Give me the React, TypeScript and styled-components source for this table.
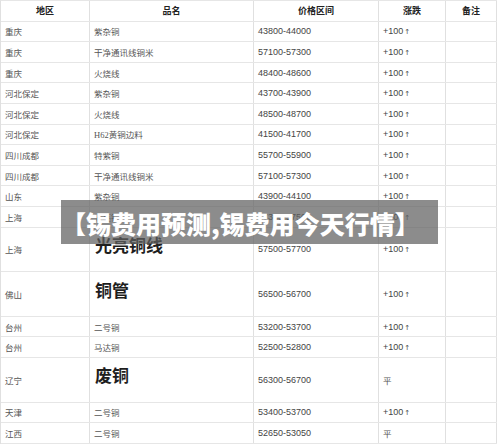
import React from "react";
import styled, { createGlobalStyle } from "styled-components";

const Global = createGlobalStyle`
  html, body { margin: 0; padding: 0; background: #fff; }
  body { font-family: "Liberation Sans", "Noto Sans CJK SC", sans-serif; }
`;

type Row = {
  region: string;
  name: string;
  price: string;
  change: string;
  big?: boolean;
};

const rows: Row[] = [
  { region: "重庆", name: "紫杂铜", price: "43800-44000", change: "+100" },
  { region: "重庆", name: "干净通讯线铜米", price: "57100-57300", change: "+100" },
  { region: "重庆", name: "火烧线", price: "48400-48600", change: "+100" },
  { region: "河北保定", name: "紫杂铜", price: "43700-43900", change: "+100" },
  { region: "河北保定", name: "火烧线", price: "48500-48700", change: "+100" },
  { region: "河北保定", name: "H62黄铜边料", price: "41500-41700", change: "+100" },
  { region: "四川成都", name: "特紫铜", price: "55700-55900", change: "+100" },
  { region: "四川成都", name: "干净通讯线铜米", price: "57100-57300", change: "+100" },
  { region: "山东", name: "紫杂铜", price: "43900-44100", change: "+100" },
  { region: "上海", name: "光亮铜线", price: "57300-57500", change: "+100" },
  { region: "上海", name: "光亮铜线", price: "57500-57700", change: "+100", big: true },
  { region: "佛山", name: "铜管", price: "56500-56700", change: "+100", big: true },
  { region: "台州", name: "二号铜", price: "53200-53700", change: "+100" },
  { region: "台州", name: "马达铜", price: "52500-52800", change: "+100" },
  { region: "辽宁", name: "废铜", price: "56300-56700", change: "平", big: true },
  { region: "天津", name: "二号铜", price: "53400-53700", change: "+100" },
  { region: "江西", name: "二号铜", price: "52650-53050", change: "平" },
];

const Page = styled.div`
  position: relative;
  width: 500px;
  height: 444px;
  overflow: hidden;
`;

const Table = styled.div`
  width: 497px;
  border-top: 1px solid #e6e6e6;
  border-left: 1px solid #e0e0e0;
  box-sizing: border-box;
`;

const GridRow = styled.div<{ $h: number }>`
  display: grid;
  grid-template-columns: 89px 164px 125px 67px 51px;
  height: ${(p) => p.$h}px;
  box-sizing: border-box;
  border-bottom: 1px solid #e6e6e6;
`;

const Cell = styled.div<{ $center?: boolean; $raise?: boolean }>`
  display: flex;
  align-items: center;
  justify-content: ${(p) => (p.$center ? "center" : "flex-start")};
  padding: 0 4px ${(p) => (p.$raise ? "10px" : "0")} 4px;
  border-right: 1px solid #e0e0e0;
  box-sizing: border-box;
  overflow: hidden;
  white-space: nowrap;
`;

const HeadText = styled.span`
  font-family: "Noto Sans CJK SC", sans-serif;
  font-weight: 700;
  font-size: 9px;
  color: #222;
`;

const CnText = styled.span`
  font-family: "Liberation Serif", "Noto Sans CJK SC", serif;
  font-size: 8.5px;
  color: #555;
`;

const BigText = styled.span`
  font-family: "Noto Sans CJK SC", sans-serif;
  font-weight: 700;
  font-size: 17px;
  color: #1e1e1e;
  margin-left: 1px;
`;

const NumText = styled.span`
  font-family: "Liberation Sans", sans-serif;
  font-size: 9px;
  color: #444;
`;

const Arrow = styled.span`
  font-family: "DejaVu Sans", sans-serif;
  font-size: 7px;
  margin-left: 1px;
`;

const Banner = styled.div`
  position: absolute;
  left: 61px;
  top: 200px;
  width: 377px;
  height: 44px;
  background: rgba(95, 95, 95, 0.72);
  display: flex;
  align-items: center;
  padding: 2px 0 0 0;
  box-sizing: border-box;
`;

const BannerText = styled.span`
  font-family: "Noto Sans CJK SC", sans-serif;
  font-weight: 900;
  font-size: 25px;
  color: #fff;
  white-space: nowrap;
`;

const heads = ["地区", "品名", "价格区间", "涨跌", "备注"];

function Change({ v }: { v: string }) {
  if (v === "平") return <CnText>平</CnText>;
  return (
    <NumText>
      {v}
      <Arrow>↑</Arrow>
    </NumText>
  );
}

export default function App() {
  return (
    <Page>
      <Global />
      <Table>
        <GridRow $h={20.7}>
          {heads.map((h) => (
            <Cell key={h} $center>
              <HeadText>{h}</HeadText>
            </Cell>
          ))}
        </GridRow>
        {rows.map((r, i) => (
          <GridRow key={i} $h={r.big ? 44.6 : 20.6}>
            <Cell>
              <CnText>{r.region}</CnText>
            </Cell>
            <Cell $raise={r.big}>
              {r.big ? <BigText>{r.name}</BigText> : <CnText>{r.name}</CnText>}
            </Cell>
            <Cell>
              <NumText>{r.price}</NumText>
            </Cell>
            <Cell>
              <Change v={r.change} />
            </Cell>
            <Cell />
          </GridRow>
        ))}
      </Table>
      <Banner>
        <BannerText>【锡费用预测,锡费用今天行情】</BannerText>
      </Banner>
    </Page>
  );
}
